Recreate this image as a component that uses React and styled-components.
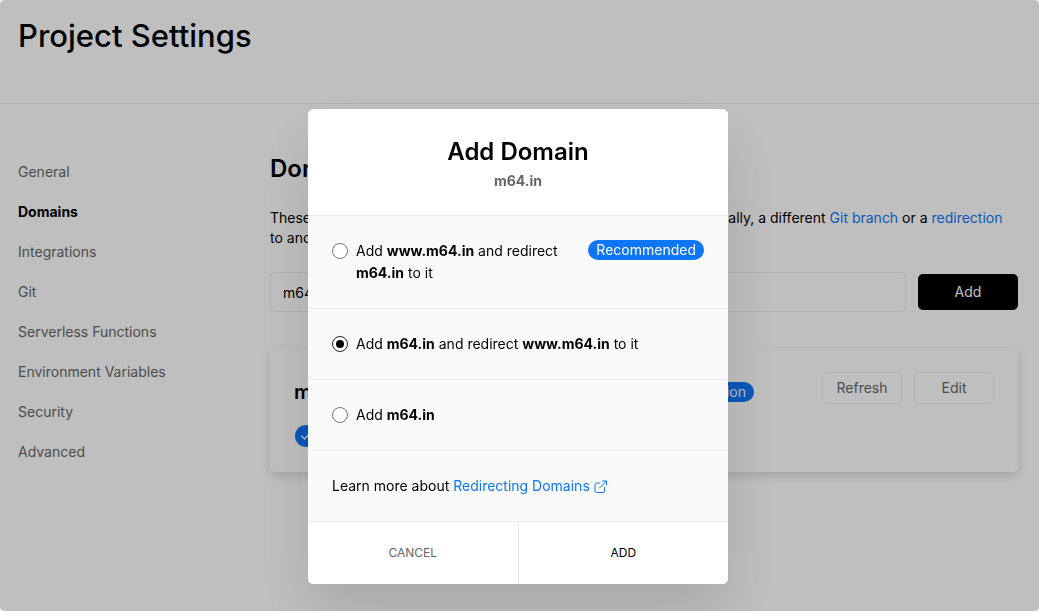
import React, { useState } from "react";
import styled, { createGlobalStyle } from "styled-components";

const Global = createGlobalStyle`
  *, *::before, *::after { box-sizing: border-box; }
  body {
    margin: 0;
    background: #eee;
    color: #000;
    font: 400 14px/20px Inter, "Liberation Sans", sans-serif;
    -webkit-font-smoothing: antialiased;
  }
  button, input { font: inherit; }
  h1, h2, h3, p { margin: 0; }
`;

const Page = styled.div`
  min-height: 100vh;
  background: #fff;
  border-radius: 5px;
`;

const PageHeader = styled.header`
  height: 104px;
  padding: 12px 18px;
  border-bottom: 1px solid #eaeaea;
`;

const PageTitle = styled.h1`
  font-size: 31px;
  line-height: 48px;
  font-weight: 500;
`;

const Columns = styled.div`
  display: flex;
  padding: 48px 21px 24px 18px;
`;

const SideNav = styled.nav`
  display: flex;
  flex-direction: column;
  flex: 0 0 252px;
`;

const NavLink = styled.a`
  line-height: 40px;
  text-decoration: none;
  color: ${(p) => (p.$active ? "#000" : "#666")};
  font-weight: ${(p) => (p.$active ? 700 : 400)};
`;

const Content = styled.main`
  flex: 1;
  min-width: 0;
`;

const SectionTitle = styled.h2`
  font-size: 24px;
  line-height: 34px;
  font-weight: 600;
`;

const Description = styled.p`
  margin-top: 22px;
`;

const TextLink = styled.a`
  color: #0d76fa;
  text-decoration: none;
  svg { vertical-align: -2px; margin-left: 4px; }
`;

const DomainForm = styled.form`
  display: flex;
  align-items: center;
  gap: 12px;
  margin-top: 24px;
`;

const DomainInput = styled.input`
  flex: 1;
  min-width: 0;
  height: 40px;
  padding: 0 12px;
  border: 1px solid #eaeaea;
  border-radius: 5px;
  background: #fff;
  color: #000;
`;

const PrimaryButton = styled.button`
  width: 100px;
  height: 36px;
  border: 0;
  border-radius: 5px;
  background: #000;
  color: #fff;
`;

const SecondaryButton = styled.button`
  width: 80px;
  height: 32px;
  padding: 0;
  border: 1px solid #eaeaea;
  border-radius: 5px;
  background: #fff;
  color: #666;
`;

const DomainCard = styled.article`
  height: 124px;
  margin-top: 36px;
  padding: 24px;
  border-radius: 5px;
  background: #fff;
  box-shadow: 0 4px 10px rgba(0, 0, 0, 0.14);
`;

const CardTop = styled.div`
  display: flex;
  gap: 12px;
`;

const CardHeading = styled.div`
  display: flex;
  flex: 1;
  align-items: center;
  justify-content: space-between;
  height: 40px;
  margin-right: 56px;
`;

const CardTitle = styled.h3`
  font-size: 20px;
  line-height: 32px;
  font-weight: 600;
`;

const Badge = styled.span`
  flex: none;
  height: 20px;
  padding: 0 8px;
  border-radius: 10px;
  background: #0d76fa;
  color: #fff;
  line-height: 20px;
`;

const Status = styled.div`
  display: flex;
  align-items: center;
  gap: 8px;
  margin-top: 13px;
  padding-left: 1px;
`;

const Overlay = styled.div`
  position: fixed;
  inset: 0;
  display: flex;
  align-items: flex-start;
  justify-content: center;
  padding: 109px 3px 0 0;
  overflow: auto;
  border-radius: 5px;
  background: rgba(0, 0, 0, 0.25);
`;

const Dialog = styled.form`
  width: 100%;
  max-width: 420px;
  overflow: hidden;
  border-radius: 6px;
  background: #fafafa;
  box-shadow: 0 30px 60px rgba(0, 0, 0, 0.12);
`;

const DialogHeader = styled.header`
  padding: 26px 24px 22px;
  background: #fff;
  text-align: center;
`;

const DialogTitle = styled.h2`
  font-size: 24px;
  line-height: 34px;
  font-weight: 600;
`;

const DialogSubtitle = styled.p`
  line-height: 24px;
  font-weight: 700;
  color: #666;
`;

const DialogRow = styled.div`
  display: flex;
  align-items: flex-start;
  justify-content: space-between;
  gap: 24px;
  padding: 24px;
  border-top: 1px solid #eaeaea;
  line-height: 22px;
`;

const Option = styled.label`
  display: flex;
  gap: 8px;
  align-items: flex-start;
  b { font-weight: 700; }
`;

const Radio = styled.input`
  appearance: none;
  flex: none;
  display: grid;
  place-items: center;
  width: 16px;
  height: 16px;
  margin: 3px 0;
  border: 1px solid #777;
  border-radius: 50%;
  background: #fff;
  &:checked { border-color: #222; }
  &:checked::before {
    content: "";
    width: 8px;
    height: 8px;
    border-radius: 50%;
    background: #000;
  }
`;

const DialogActions = styled.footer`
  display: flex;
  border-top: 1px solid #eaeaea;
  background: #fff;
`;

const ActionButton = styled.button`
  flex: 1;
  height: 62px;
  border: 0;
  background: #fff;
  color: ${(p) => (p.$muted ? "#666" : "#000")};
  font-size: 12px;
  text-transform: uppercase;
  &:first-child { border-right: 1px solid #eaeaea; }
`;

const ExternalIcon = () => (
  <svg width="13" height="13" viewBox="0 0 13 13" fill="none" stroke="currentColor" strokeLinecap="round" strokeLinejoin="round" aria-hidden="true">
    <path d="M10.500 7.500v3.500a1.500 1.500 0 0 1-1.500 1.500H2.500A1.500 1.500 0 0 1 1 11V4.500A1.500 1.500 0 0 1 2.500 3H5.500M8.500 1h4v4M12.500 1 5.500 8" />
  </svg>
);

const CheckIcon = () => (
  <svg width="22" height="22" viewBox="0 0 22 22" fill="none" aria-hidden="true">
    <circle cx="11" cy="11" r="11" fill="#0d76fa" />
    <path d="m6.500 11 3 3 5.500-5.500" stroke="#fff" strokeWidth="1.300" strokeLinecap="round" strokeLinejoin="round" />
  </svg>
);

const navItems = [
  "General",
  "Domains",
  "Integrations",
  "Git",
  "Serverless Functions",
  "Environment Variables",
  "Security",
  "Advanced",
];

const options = [
  { id: "to-www", badge: "Recommended", label: <>Add <b>www.m64.in</b> and redirect<br /><b>m64.in</b> to it</> },
  { id: "to-apex", label: <>Add <b>m64.in</b> and redirect <b>www.m64.in</b> to it</> },
  { id: "apex-only", label: <>Add <b>m64.in</b></> },
];

export default function App() {
  const [choice, setChoice] = useState("to-apex");
  const stay = (e) => e.preventDefault();

  return (
    <>
      <Global />
      <Page>
        <PageHeader>
          <PageTitle>Project Settings</PageTitle>
        </PageHeader>
        <Columns>
          <SideNav aria-label="Settings">
            {navItems.map((item) => (
              <NavLink key={item} href="#" $active={item === "Domains"}>{item}</NavLink>
            ))}
          </SideNav>
          <Content>
            <SectionTitle>Domains</SectionTitle>
            <Description>
              These domains are assigned to your Production Deployments. Optionally, a different{" "}
              <TextLink href="#">Git branch</TextLink> or a <TextLink href="#">redirection</TextLink>{" "}
              to another domain can be configured for each one.
            </Description>
            <DomainForm onSubmit={stay}>
              <DomainInput aria-label="Domain" defaultValue="m64.in" />
              <PrimaryButton>Add</PrimaryButton>
            </DomainForm>
            <DomainCard>
              <CardTop>
                <CardHeading>
                  <CardTitle>m64.vercel.app</CardTitle>
                  <Badge>Production</Badge>
                </CardHeading>
                <SecondaryButton>Refresh</SecondaryButton>
                <SecondaryButton>Edit</SecondaryButton>
              </CardTop>
              <Status><CheckIcon />Valid Configuration</Status>
            </DomainCard>
          </Content>
        </Columns>
      </Page>
      <Overlay>
        <Dialog role="dialog" aria-modal="true" aria-labelledby="dialog-title" onSubmit={stay}>
          <DialogHeader>
            <DialogTitle id="dialog-title">Add Domain</DialogTitle>
            <DialogSubtitle>m64.in</DialogSubtitle>
          </DialogHeader>
          {options.map(({ id, label, badge }) => (
            <DialogRow key={id}>
              <Option htmlFor={id}>
                <Radio type="radio" name="redirect" id={id} checked={choice === id} onChange={() => setChoice(id)} />
                <span>{label}</span>
              </Option>
              {badge && <Badge>{badge}</Badge>}
            </DialogRow>
          ))}
          <DialogRow>
            <span>
              Learn more about <TextLink href="#">Redirecting Domains<ExternalIcon /></TextLink>
            </span>
          </DialogRow>
          <DialogActions>
            <ActionButton type="button" $muted>Cancel</ActionButton>
            <ActionButton type="submit">Add</ActionButton>
          </DialogActions>
        </Dialog>
      </Overlay>
    </>
  );
}
